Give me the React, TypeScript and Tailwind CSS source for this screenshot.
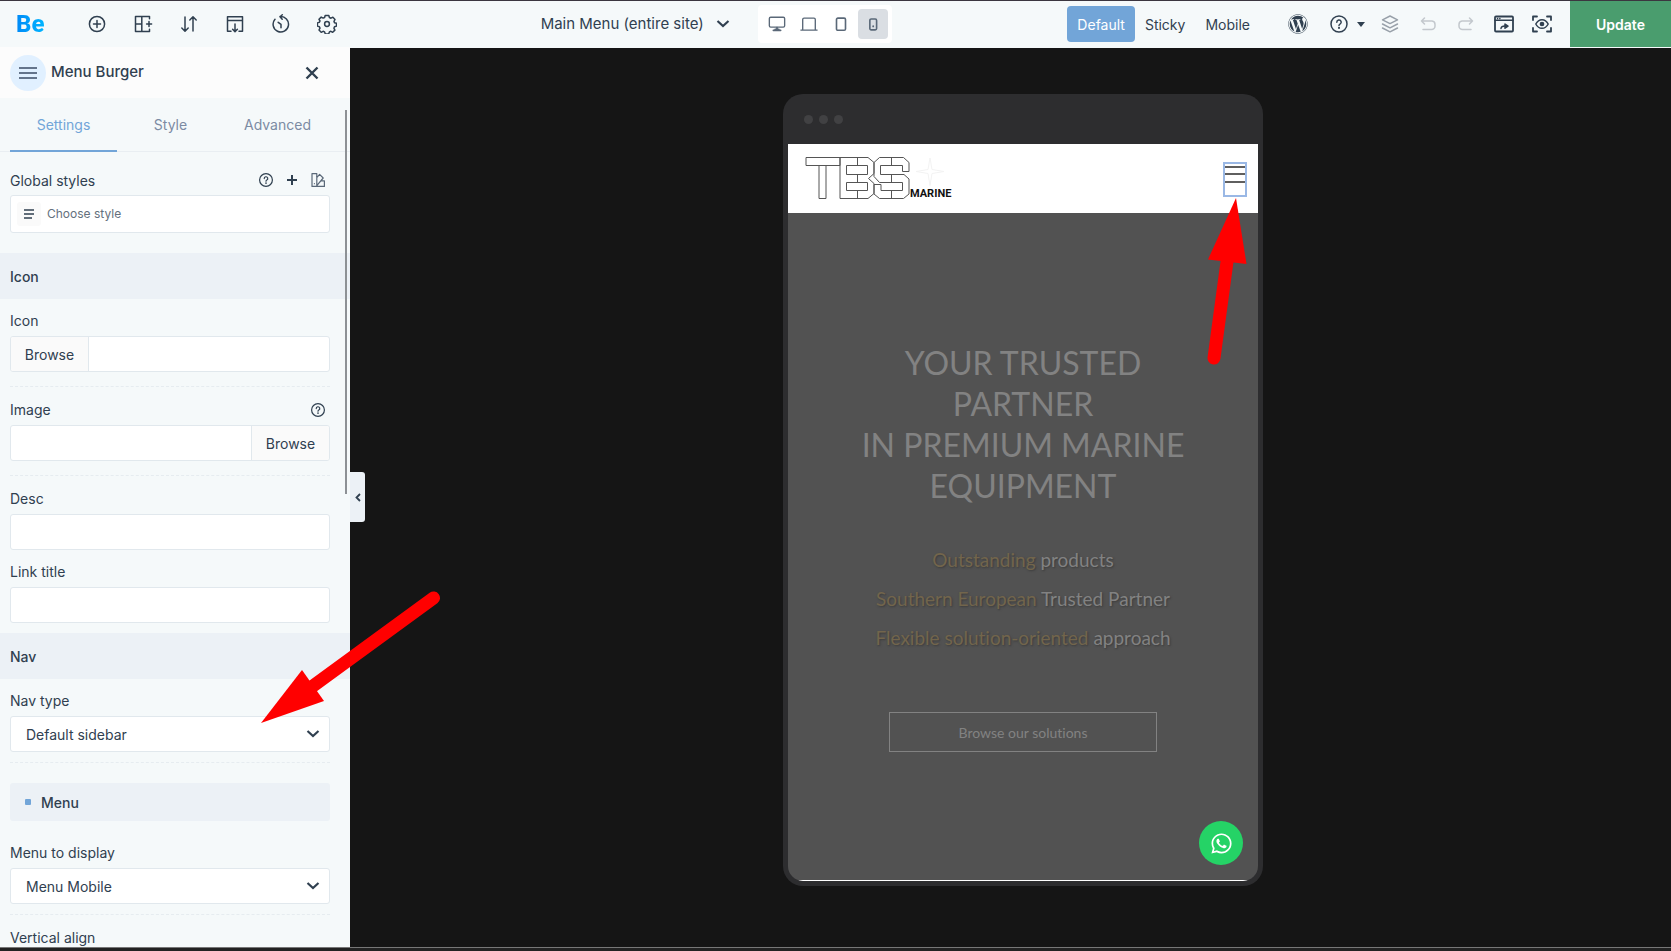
import type { ReactNode } from "react";
import { FaWordpress, FaWhatsapp } from "react-icons/fa";

function Icon({ children, size = 20, className = "" }: { children: ReactNode; size?: number; className?: string }) {
  return (
    <svg
      width={size}
      height={size}
      viewBox="0 0 20 20"
      fill="none"
      stroke="currentColor"
      strokeWidth={1.5}
      strokeLinecap="round"
      strokeLinejoin="round"
      className={className}
      aria-hidden="true"
    >
      {children}
    </svg>
  );
}

function HelpIcon({ size = 20 }: { size?: number }) {
  return (
    <Icon size={size}>
      <circle cx="10" cy="10" r="8" />
      <path d="M7.8 8.2a2.2 2.2 0 1 1 3.2 1.9c-.7.4-1 .7-1 1.4" />
      <path d="M10 13.8v.2" strokeWidth={2} />
    </Icon>
  );
}

const tools = [
  {
    label: "Add element",
    icon: (
      <Icon>
        <circle cx="10" cy="10" r="7.6" />
        <path d="M10 6.5v7M6.5 10h7" />
      </Icon>
    ),
  },
  {
    label: "Prebuilt sections",
    icon: (
      <Icon>
        <path d="M16.5 2.5h-14v15h14M8.8 2.5v15M2.5 10h6.3M16.5 2.5v2.3M16.5 15.2v2.3M16 7.6v4.8M13.6 10h5" />
      </Icon>
    ),
  },
  {
    label: "Navigator",
    icon: (
      <Icon>
        <path d="M6 3v14M2.8 14 6 17.2 9.2 14M14 17V3M10.8 6 14 2.8 17.2 6" />
      </Icon>
    ),
  },
  {
    label: "Single page import",
    icon: (
      <Icon>
        <path d="M6 17.2H2.5V2.8h15v14.4H14M2.5 6.6h15M10 10v7.4M7.6 15.2l2.4 2.4 2.4-2.4" />
      </Icon>
    ),
  },
  {
    label: "History",
    icon: (
      <Icon>
        <path d="M9 2.6a7.7 7.7 0 1 1-5 2.6M11.3.8 9 2.8l2.2 2.4M7.2 8.3 10 10.4v3.4" />
      </Icon>
    ),
  },
  {
    label: "Settings",
    icon: (
      <Icon>
        <circle cx="10" cy="10" r="2.4" />
        <path d="M8.2 1.5h3.6l.6 2 1.6.7 1.9-1 2.1 2.3-1 1.9.5 1.3 2 .6v2.8l-2 .7-.6 1.4 1 1.9-2.2 2.2-1.8-1-1.5.6-.7 2H8.3l-.7-2-1.5-.6-1.9 1L2 16l1-1.9-.6-1.4-2-.6V8.9l2-.6L3 7 2 5.3l2.2-2.2 1.9 1 1.5-.6z" />
      </Icon>
    ),
  },
];

function Chevron() {
  return (
    <svg width="14" height="10" viewBox="0 0 14 10" fill="none" stroke="currentColor" strokeWidth="2.2" aria-hidden="true">
      <path d="m1.5 2 5.500 5 5.500-5" />
    </svg>
  );
}

function TopBar() {
  return (
    <header className="flex h-[47px] shrink-0 items-center justify-between border-t border-[#3b3640] bg-[#f5f9fa] text-[#304050]">
      <div className="flex items-center">
        <div className="ml-4 w-[71px]">
          <span className="bg-linear-to-r from-[#0089f7] to-[#00b4ff] bg-clip-text font-[Roboto,sans-serif] text-[24px] leading-8 font-extrabold text-transparent">
            Be
          </span>
        </div>
        <nav className="flex gap-[26px]">
          {tools.map((t) => (
            <button key={t.label} type="button" aria-label={t.label}>
              {t.icon}
            </button>
          ))}
        </nav>
      </div>

      <div className="ml-7 flex items-center">
        <button type="button" className="flex items-center gap-3 text-[15px]">
          Main Menu (entire site)
          <Chevron />
        </button>
        <div className="ml-7 flex h-[38px] items-center gap-0.5 rounded bg-white px-1 text-[#5a6878]">
          <button type="button" aria-label="Desktop" className="grid size-[30px] place-items-center">
            <Icon size={18}>
              <rect x="1.5" y="2.5" width="17" height="11" rx="1.5" />
              <path d="M6 17h8M8 16h4M10 14v2" strokeWidth={2} />
            </Icon>
          </button>
          <button type="button" aria-label="Laptop" className="grid size-[30px] place-items-center">
            <Icon size={18}>
              <path d="M3 16.5V5a1.5 1.5 0 0 1 1.5-1.5h11A1.5 1.5 0 0 1 17 5v11.5M1 16.8h18" />
            </Icon>
          </button>
          <button type="button" aria-label="Tablet" className="grid size-[30px] place-items-center">
            <Icon size={18}>
              <rect x="5" y="3.5" width="10" height="13.5" rx="1.5" strokeWidth={1.8} />
            </Icon>
          </button>
          <button type="button" aria-label="Phone" className="grid size-[30px] place-items-center rounded-sm bg-[#dadee3]">
            <Icon size={18}>
              <rect x="6.5" y="4.5" width="7.5" height="12" rx="1.5" strokeWidth={1.8} />
              <path d="M10.2 12.5v.2" strokeWidth={2} />
            </Icon>
          </button>
        </div>
      </div>

      <div className="flex items-center self-stretch">
        <div className="flex items-center text-[14px]">
          <button type="button" className="h-9 rounded-sm bg-[#72a5d8] px-2.5 text-white">
            Default
          </button>
          <button type="button" className="px-2.5">
            Sticky
          </button>
          <button type="button" className="px-2.5">
            Mobile
          </button>
        </div>
        <div className="ml-7 mr-[18px] flex items-center gap-[18px]">
          <button type="button" aria-label="WordPress">
            <FaWordpress size={20} />
          </button>
          <button type="button" aria-label="Help" className="-mr-[3px] ml-[3px] flex items-center gap-2">
            <HelpIcon />
            <svg width="8" height="5" viewBox="0 0 8 5" fill="currentColor" aria-hidden="true">
              <path d="M0 0h8L4 5z" />
            </svg>
          </button>
          <button type="button" aria-label="Layers" className="text-[#98a0a9]">
            <Icon>
              <path d="m10 2 7.5 3.8L10 9.6 2.5 5.8zM2.5 10l7.5 3.8 7.5-3.8M2.5 14l7.5 3.8 7.5-3.8" />
            </Icon>
          </button>
          <button type="button" aria-label="Undo" className="text-[#c3c8cd]">
            <Icon>
              <path d="m6.5 4-3 3 3 3M3.5 7H14a3.5 3.5 0 0 1 3 3.5v1.5a3.5 3.5 0 0 1-3.5 3.5H5" />
            </Icon>
          </button>
          <button type="button" aria-label="Redo" className="text-[#c3c8cd]">
            <Icon>
              <path d="m13.5 4 3 3-3 3M16.5 7H6a3.5 3.5 0 0 0-3 3.5v1.5a3.5 3.5 0 0 0 3.5 3.5H15" />
            </Icon>
          </button>
          <button type="button" aria-label="Preview">
            <Icon>
              <rect x="1" y="2.5" width="18" height="15" rx="1" strokeWidth={1.8} />
              <path d="M1 6.2h18M3.5 4.4h.1M5.8 4.4h.1M7 14.5c.2-1.7 1.5-2.5 4-2.5" />
              <path d="m11 10 3 2.1-3 2.1z" fill="currentColor" />
            </Icon>
          </button>
          <button type="button" aria-label="Live view">
            <Icon>
              <path d="M1 6V2.5h4M15 2.5h4V6M19 14v3.5h-4M5 17.5H1V14" strokeWidth={1.8} />
              <path d="M3.8 10c3-5.8 9.4-5.8 12.4 0-3 5.8-9.4 5.8-12.4 0z" />
              <circle cx="10" cy="10" r="1.6" fill="currentColor" />
            </Icon>
          </button>
        </div>
        <button type="button" className="w-[101px] self-stretch bg-[#4a9d6e] text-[14px] font-semibold text-white">
          Update
        </button>
      </div>
    </header>
  );
}

const box = "w-full rounded-[3px] border border-[#e1e8ed] bg-white";

function Section({ title }: { title: string }) {
  return <h2 className="flex h-[46px] items-center bg-[#ecf1f6] px-2.5 text-[14px] font-medium">{title}</h2>;
}

function Divider() {
  return <div className="ml-2.5 mr-5 mt-2.5 border-t border-dashed border-[#e6ecf0]" />;
}

function TextField({ id, label }: { id: string; label: string }) {
  return (
    <div className="pl-2.5 pr-5">
      <label htmlFor={id} className="block leading-[22px]">
        {label}
      </label>
      <input id={id} type="text" className={`${box} mt-1 block h-9 px-4`} />
    </div>
  );
}

function SelectField({ id, label, value }: { id: string; label: string; value: string }) {
  return (
    <div className="pl-2.5 pr-5">
      <label htmlFor={id} className="block leading-[22px]">
        {label}
      </label>
      <div className="relative mt-1">
        <select id={id} defaultValue={value} className={`${box} block h-9 appearance-none px-[15px]`}>
          <option>{value}</option>
        </select>
        <span className="pointer-events-none absolute inset-y-0 right-2.5 flex items-center">
          <Chevron />
        </span>
      </div>
    </div>
  );
}

function Sidebar() {
  return (
    <aside className="relative flex w-[350px] shrink-0 flex-col overflow-hidden bg-[#f5f9fa] text-[14px] text-[#304050]">
      <div className="flex h-[51px] shrink-0 items-center bg-[#fcfcfc] px-2.5">
        <span className="grid size-9 place-items-center rounded-full bg-[#e1f0ff] text-[#64748b]">
          <svg width="18" height="14" viewBox="0 0 18 14" stroke="currentColor" strokeWidth="2" aria-hidden="true">
            <path d="M0 2h18M0 7h18M0 12h18" />
          </svg>
        </span>
        <h1 className="ml-[5px] flex-1 text-[15px] font-medium">Menu Burger</h1>
        <button type="button" aria-label="Close" className="mr-[21px]">
          <svg width="14" height="14" viewBox="0 0 14 14" stroke="currentColor" strokeWidth="2.4" aria-hidden="true">
            <path d="m1.5 1.5 11 11M12.5 1.5l-11 11" />
          </svg>
        </button>
      </div>

      <div className="flex h-[54px] shrink-0 border-b border-[#e9eef2] px-2.5 text-[#7c8ba3]">
        <button type="button" className="-mb-px w-[107px] border-b-2 border-[#72a5d8] text-[#72a5d8]">
          Settings
        </button>
        <button type="button" className="w-[107px]">
          Style
        </button>
        <button type="button" className="w-[107px]">
          Advanced
        </button>
      </div>

      <div className="min-h-0 flex-1 overflow-hidden">
        <div className="pl-2.5 pr-5 pt-[18px]">
          <div className="flex h-5 items-center">
            <span className="flex-1">Global styles</span>
            <div className="mr-1 flex items-center gap-3">
              <button type="button" aria-label="Help">
                <HelpIcon size={16} />
              </button>
              <button type="button" aria-label="Add style">
                <svg width="12" height="12" viewBox="0 0 12 12" stroke="currentColor" strokeWidth="2" aria-hidden="true">
                  <path d="M6 1v10M1 6h10" />
                </svg>
              </button>
              <button type="button" aria-label="Manage styles" className="text-[#5a6878]">
                <Icon size={16}>
                  <path d="M2.5 2h6v16h-6zM8.5 7l3.5-4 4.5 4.5L8.5 17M14 11h4v7H8.5M5.5 14.5v.2" />
                </Icon>
              </button>
            </div>
          </div>
          <button type="button" className={`${box} mt-[5px] flex h-[38px] items-center gap-1.5 px-1.5 text-[12px] text-[#64707d]`}>
            <span className="grid size-6 place-items-center rounded-[3px] bg-[#fafafa] text-[#304050]">
              <svg width="10" height="10" viewBox="0 0 10 10" stroke="currentColor" strokeWidth="1.5" aria-hidden="true">
                <path d="M0 1h10M0 5h10M0 9h8" />
              </svg>
            </span>
            Choose style
          </button>
        </div>

        <div className="mt-5">
          <Section title="Icon" />
        </div>
        <div className="pl-2.5 pr-5 pt-[11px]">
          <label htmlFor="icon" className="block leading-[22px]">
            Icon
          </label>
          <div className={`${box} mt-1 flex h-9 overflow-hidden`}>
            <button type="button" className="w-[78px] border-r border-[#e1e8ed] bg-[#fafafa]">
              Browse
            </button>
            <input id="icon" type="text" className="min-w-0 flex-1 px-3" />
          </div>
        </div>
        <div className="pt-1">
          <Divider />
        </div>
        <div className="pl-2.5 pr-5 pt-3">
          <div className="flex h-[22px] justify-between pr-1">
            <label htmlFor="image" className="leading-[22px]">
              Image
            </label>
            <button type="button" aria-label="Image help">
              <HelpIcon size={16} />
            </button>
          </div>
          <div className={`${box} mt-1 flex h-9 overflow-hidden`}>
            <input id="image" type="text" className="min-w-0 flex-1 px-3" />
            <button type="button" className="w-[78px] border-l border-[#e1e8ed] bg-[#fafafa]">
              Browse
            </button>
          </div>
        </div>
        <div className="pt-1">
          <Divider />
        </div>
        <div className="flex flex-col gap-[11px] pb-2.5 pt-3">
          <TextField id="desc" label="Desc" />
          <TextField id="link-title" label="Link title" />
        </div>

        <Section title="Nav" />
        <div className="pt-[11px]">
          <SelectField id="nav-type" label="Nav type" value="Default sidebar" />
          <Divider />
        </div>
        <h3 className="ml-2.5 mr-5 mt-5 flex h-[38px] items-center gap-2.5 rounded-[3px] bg-[#ecf1f6] px-[15px] font-medium">
          <span className="size-1.5 rounded-[1px] bg-[#72a5d8]" />
          Menu
        </h3>
        <div className="pt-[21px]">
          <SelectField id="menu" label="Menu to display" value="Menu Mobile" />
          <Divider />
        </div>
        <p className="px-2.5 pt-3 leading-[22px]">Vertical align</p>
      </div>

      {/* scroll thumb */}
      <div className="absolute right-[3px] top-[63px] h-96 w-0.5 bg-[#8d9195]" />
    </aside>
  );
}

function TbsLogo() {
  return (
    <svg width="154" height="46" viewBox="0 0 154 46" fill="none" role="img" aria-label="TBS Marine">
      <g stroke="#555" strokeWidth="1">
        <path d="M2 1.5h34v8h-14v33h-7v-33H2zM15 9.5h7" />
        <path d="M36 1.5h28l6 5v11l-5.5 5 5.5 5v10l-6 5H36zM42.5 9.5h21v9h-21zM42.5 26.5h21v8h-21zM53.5 1.5v8M53.5 18.5v8M53.5 34.5v8" />
        <path d="M75.5 1.5h24l5.5 5v9h-6.5v-6h-22v9H100l5 4.5v15l-5.5 4.5h-24L70 38v-9.5h7v6h21.5v-8h-23L70 20.5v-14zM87.5 1.5v8M87.5 18.5v8M87.5 34.5v8" />
      </g>
      <path d="m126 2 2 11.5 12 2-12 2-2 12-2-12-12-2 12-2z" stroke="#f3f3f3" />
      <text x="106" y="41" fontFamily="Roboto, sans-serif" fontSize="11" fontWeight="700" fill="#111">
        MARINE
      </text>
    </svg>
  );
}

function PhonePreview() {
  return (
    <div className="flex min-h-0 w-[480px] max-w-full flex-col overflow-hidden rounded-[20px] bg-[#2d2d2f] px-[5px] pb-[5px]">
      <div className="flex h-[50px] shrink-0 items-center gap-1.5 px-4">
        <span className="size-[9px] rounded-full bg-[#414143]" />
        <span className="size-[9px] rounded-full bg-[#414143]" />
        <span className="size-[9px] rounded-full bg-[#414143]" />
      </div>
      <div className="relative flex min-h-0 flex-1 flex-col overflow-hidden rounded-b-[15px] bg-[#525252] font-[Lato,sans-serif]">
        <div className="flex h-[69px] shrink-0 items-start justify-between bg-white pl-4 pr-[11px] pt-3">
          <TbsLogo />
          <button type="button" aria-label="Menu" className="relative mt-1.5 flex h-[35px] w-6 items-start border-2 border-[#9ab8e5]">
            <svg width="20" height="20" viewBox="0 0 20 20" stroke="#5f5f5f" strokeWidth="2" aria-hidden="true">
              <path d="M0 3h20M0 10h20M0 18h20" />
            </svg>
            <svg width="40" height="168" viewBox="0 0 40 168" className="absolute -left-[18px] top-[34px] z-10" fill="red" aria-hidden="true">
              <path d="M29 0 39.5 66 1 61.5z" />
              <path d="M20.5 60 7 160" stroke="red" strokeWidth="13" strokeLinecap="round" />
            </svg>
          </button>
        </div>
        <div className="flex flex-1 flex-col items-center px-16 pt-[129px] text-center text-[#828282] [font-variant-ligatures:none]">
          <h2 className="text-[32px] leading-[41px]">
            YOUR TRUSTED PARTNER
            <br />
            IN PREMIUM MARINE EQUIPMENT
          </h2>
          <div className="mt-[34px] whitespace-nowrap text-[19px] leading-[39px] [text-shadow:1px_1px_2px_#3c3c3c]">
            <p>
              <span className="text-[#72654c]">Outstanding</span> products
            </p>
            <p>
              <span className="text-[#72654c]">Southern European</span> Trusted Partner
            </p>
            <p>
              <span className="text-[#72654c]">Flexible solution-oriented</span> approach
            </p>
          </div>
          <button type="button" className="mt-[55px] h-10 w-[268px] border border-[#828282] text-[14px]">
            Browse our solutions
          </button>
        </div>
        <a
          href="#whatsapp"
          aria-label="WhatsApp"
          className="absolute bottom-4 right-[15px] grid size-11 place-items-center rounded-full bg-[#25d366] text-white"
        >
          <FaWhatsapp size={23} />
        </a>
        <div className="absolute inset-x-0 bottom-0 h-px bg-white" />
      </div>
    </div>
  );
}

export default function App() {
  return (
    <div className="flex h-screen flex-col bg-[#151515] font-[Inter,sans-serif]">
      <TopBar />
      <main className="relative flex min-h-0 flex-1">
        <Sidebar />
        <section className="relative flex min-w-0 flex-1 justify-center border-t border-[#f5f9fa] pb-[61px] pl-[25px] pt-[46px]">
          <button
            type="button"
            aria-label="Collapse panel"
            className="absolute left-0 top-[424px] grid h-[50px] w-[15px] place-items-center rounded-r-[3px] bg-[#ecf1f6] text-[#304050]"
          >
            <svg width="6" height="9" viewBox="0 0 6 9" fill="none" stroke="currentColor" strokeWidth="1.8" aria-hidden="true">
              <path d="M5 1 1.5 4.5 5 8" />
            </svg>
          </button>
          <PhonePreview />
        </section>
        <svg width="180" height="134" viewBox="0 0 180 134" className="absolute left-[261px] top-[543px]" fill="red" aria-hidden="true">
          <path d="M0 133 41 80l22 31z" />
          <path d="M52 96 172.5 8" stroke="red" strokeWidth="13" strokeLinecap="round" />
        </svg>
      </main>
      <footer className="h-1 shrink-0 border-t border-[#777] bg-[#222]" />
    </div>
  );
}
